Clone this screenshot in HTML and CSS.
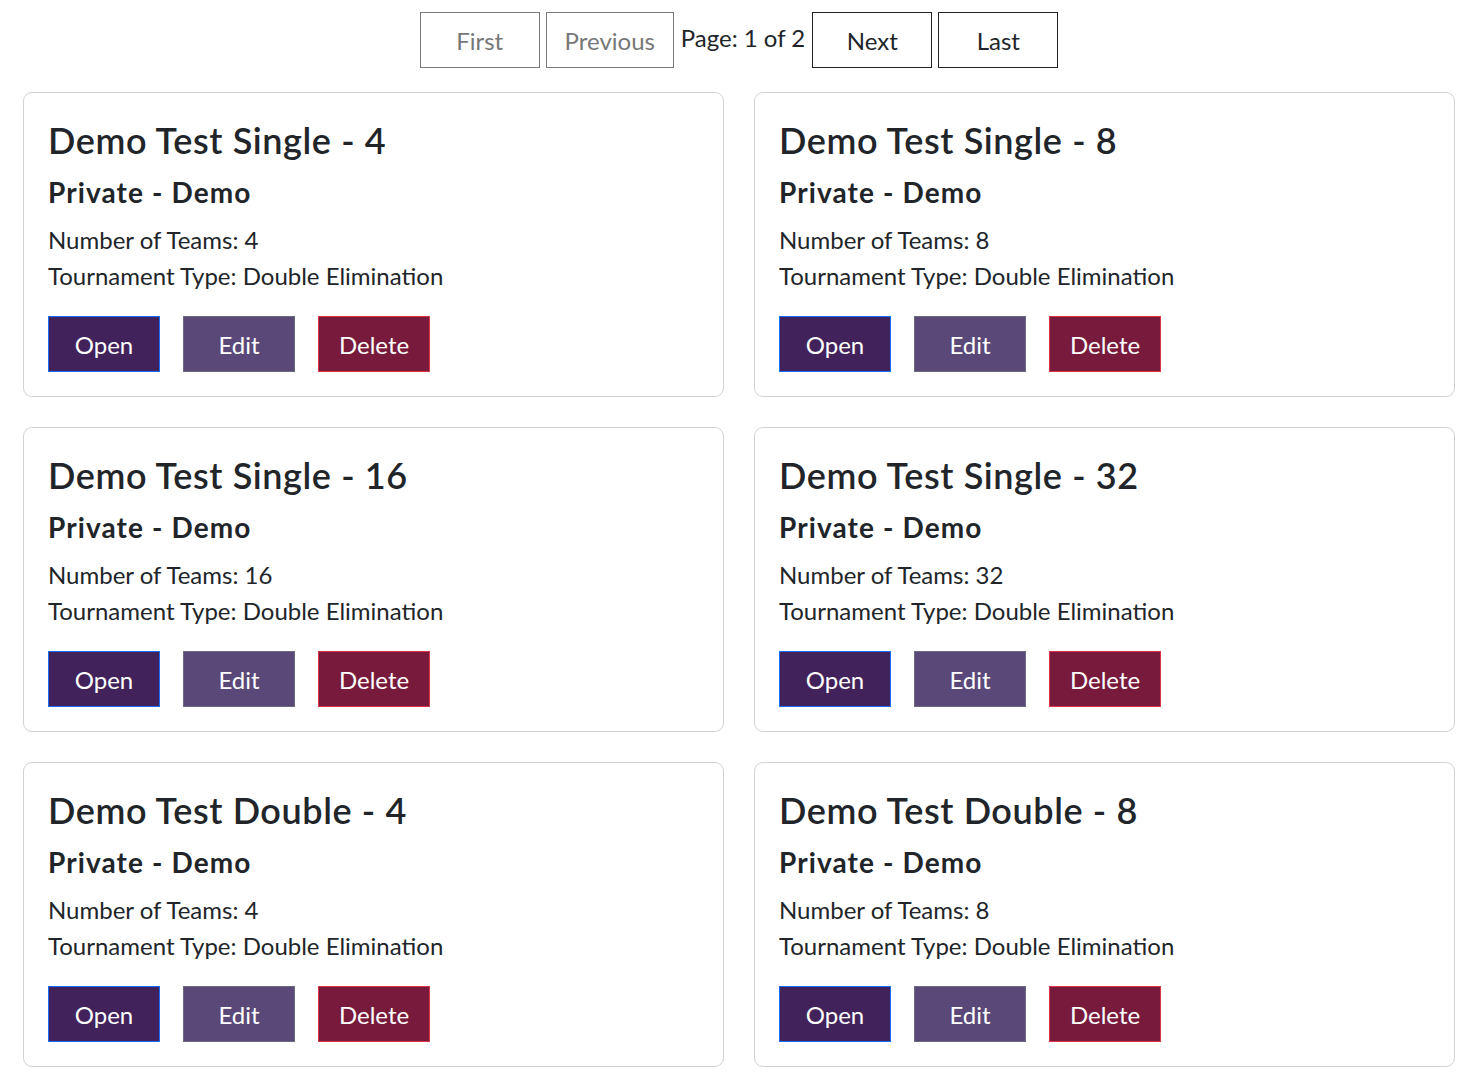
FILE: index.html
```html
<!DOCTYPE html>
<html lang="en">
<head>
<meta charset="utf-8">
<title>Tournaments</title>
<link rel="stylesheet" href="styles.css">
</head>
<body>
<div class="pager">
  <button class="pbtn disabled">First</button>
  <button class="pbtn disabled wide">Previous</button>
  <span class="pinfo">Page: 1 of 2</span>
  <button class="pbtn">Next</button>
  <button class="pbtn">Last</button>
</div>
<div class="grid">
  <div class="card">
    <h2 class="title">Demo Test Single - 4</h2>
    <h3 class="sub">Private - Demo</h3>
    <p class="line">Number of Teams: 4</p>
    <p class="line">Tournament Type: Double Elimination</p>
    <div class="actions"><button class="btn open">Open</button><button class="btn edit">Edit</button><button class="btn del">Delete</button></div>
  </div>
  <div class="card">
    <h2 class="title">Demo Test Single - 8</h2>
    <h3 class="sub">Private - Demo</h3>
    <p class="line">Number of Teams: 8</p>
    <p class="line">Tournament Type: Double Elimination</p>
    <div class="actions"><button class="btn open">Open</button><button class="btn edit">Edit</button><button class="btn del">Delete</button></div>
  </div>
  <div class="card">
    <h2 class="title">Demo Test Single - 16</h2>
    <h3 class="sub">Private - Demo</h3>
    <p class="line">Number of Teams: 16</p>
    <p class="line">Tournament Type: Double Elimination</p>
    <div class="actions"><button class="btn open">Open</button><button class="btn edit">Edit</button><button class="btn del">Delete</button></div>
  </div>
  <div class="card">
    <h2 class="title">Demo Test Single - 32</h2>
    <h3 class="sub">Private - Demo</h3>
    <p class="line">Number of Teams: 32</p>
    <p class="line">Tournament Type: Double Elimination</p>
    <div class="actions"><button class="btn open">Open</button><button class="btn edit">Edit</button><button class="btn del">Delete</button></div>
  </div>
  <div class="card">
    <h2 class="title">Demo Test Double - 4</h2>
    <h3 class="sub">Private - Demo</h3>
    <p class="line">Number of Teams: 4</p>
    <p class="line">Tournament Type: Double Elimination</p>
    <div class="actions"><button class="btn open">Open</button><button class="btn edit">Edit</button><button class="btn del">Delete</button></div>
  </div>
  <div class="card">
    <h2 class="title">Demo Test Double - 8</h2>
    <h3 class="sub">Private - Demo</h3>
    <p class="line">Number of Teams: 8</p>
    <p class="line">Tournament Type: Double Elimination</p>
    <div class="actions"><button class="btn open">Open</button><button class="btn edit">Edit</button><button class="btn del">Delete</button></div>
  </div>
</div>
</body>
</html>
```
FILE: styles.css
```css
* { box-sizing: border-box; }
html, body { margin: 0; padding: 0; background: #fff; }
body {
  font-family: Lato, "Noto Sans", sans-serif;
  color: #212529;
  font-size: 24px;
  line-height: 1.5;
}
.pager {
  display: flex;
  justify-content: center;
  align-items: flex-start;
  gap: 6px;
  padding: 12px 12px 0 25px;
  height: 92px;
}
.pbtn {
  font-family: inherit;
  font-size: 24px;
  width: 120px;
  height: 56px;
  background: #fff;
  color: #212529;
  border: 1px solid #222;
  padding: 2px 0 0;
  line-height: 1;
}
.pbtn.wide { width: 128px; }
.pbtn.disabled { color: #777; border-color: #7a7a7a; }
.pinfo {
  padding: 0 1px;
  margin-top: 12px;
  line-height: 1.2;
}
.grid {
  display: grid;
  grid-template-columns: 701px 701px;
  column-gap: 30px;
  row-gap: 30px;
  padding: 0 0 0 23px;
}
.card {
  border: 1px solid #d2d2d2;
  border-radius: 9px;
  padding: 24px;
  height: 305px;
}
.title {
  margin: 0;
  font-size: 36px;
  font-weight: 600;
  line-height: 43px;
  padding-top: 2px;
  letter-spacing: 0.6px;
}
.sub {
  margin: 13px 0 13px;
  font-size: 28px;
  font-weight: 700;
  line-height: 34px;
  letter-spacing: 1.1px;
}
.line {
  margin: 0;
  line-height: 36px;
}
.actions {
  display: flex;
  gap: 23px;
  margin-top: 22px;
}
.btn {
  font-family: inherit;
  font-size: 24px;
  width: 112px;
  height: 56px;
  color: #fff;
  padding: 2px 0 0;
  line-height: 1;
  border: 1px solid;
}
.btn.open { background: #41225b; border-color: #1a6dfc; }
.btn.edit { background: #594878; border-color: #6b6b80; }
.btn.del { background: #771a3b; border-color: #dc3545; }
```
